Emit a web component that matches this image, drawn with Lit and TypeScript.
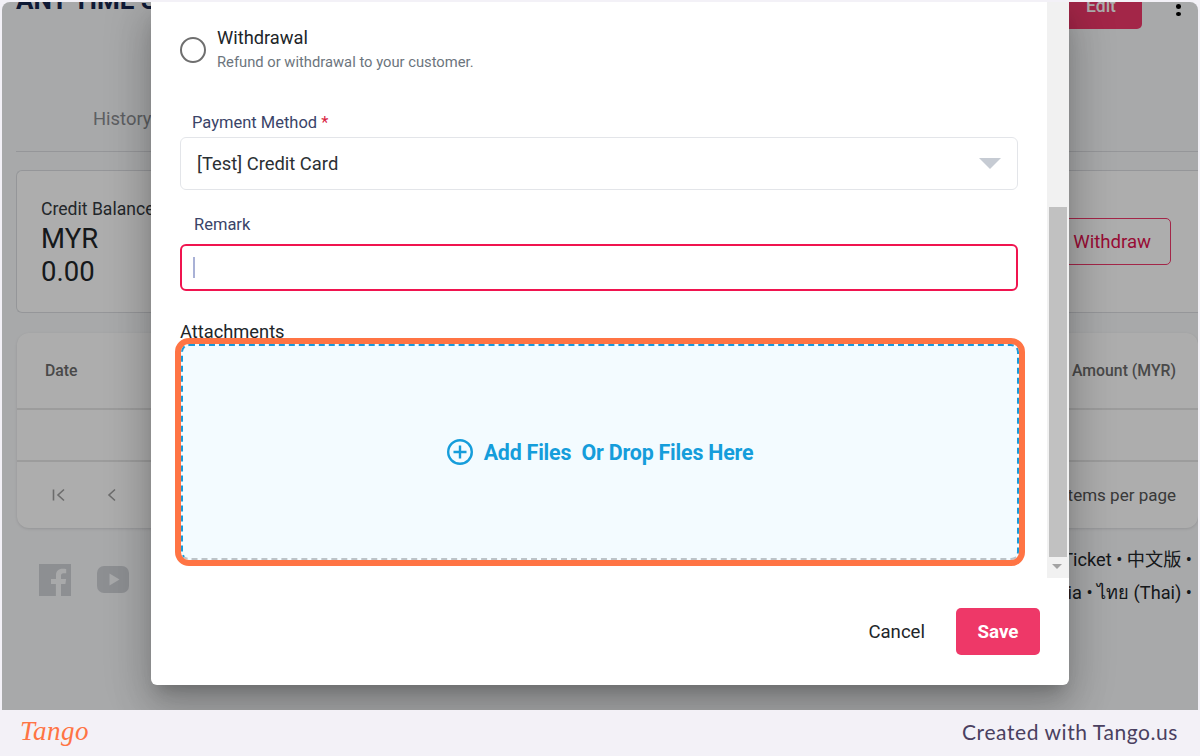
import { LitElement, css, html } from 'lit';
import { customElement } from 'lit/decorators.js';

@customElement('app-root')
export class AppRoot extends LitElement {
  static styles = css`
    :host {
      display: block;
      width: 1200px;
      height: 756px;
      overflow: hidden;
      background: #f3f1f7;
      font-family: Roboto, "Noto Sans CJK SC", sans-serif;
      color: #212529;
    }

    .shot {
      position: relative;
      height: 708px;
      margin: 2px 2px 0;
      border-radius: 8px 8px 0 0;
      overflow: hidden;
      background: #f8f9fb;
    }

    /* page behind the dialog */
    .page {
      display: flex;
      flex-direction: column;
      width: 1196px;
      padding-left: 14px;
      box-sizing: border-box;
    }

    .head {
      display: flex;
      justify-content: space-between;
      height: 26px;
      margin-top: -12px;
    }
    .title {
      margin-top: -3px;
      font-size: 26px;
      font-weight: 700;
      line-height: 26px;
      color: #16254f;
      white-space: nowrap;
    }
    .head-right {
      display: flex;
      gap: 34px;
      padding-right: 17px;
    }
    .edit {
      width: 82px;
      height: 39px;
      box-sizing: border-box;
      padding-top: 6px;
      border-radius: 5px;
      background: #f0386b;
      color: #fff;
      font-size: 17.5px;
      font-weight: 500;
      text-align: center;
    }
    .dots {
      display: flex;
      flex-direction: column;
      gap: 3px;
      padding-top: 6.5px;
    }
    .dots i {
      width: 5px;
      height: 5px;
      border-radius: 50%;
      background: #000;
    }

    .tabs {
      height: 122px;
      padding: 77px 0 0 77px;
      box-sizing: border-box;
      margin-top: 14px;
      border-bottom: 1px solid #dcdee2;
      font-size: 18.4px;
      line-height: 24px;
      color: #8a8d91;
    }

    .balance {
      display: flex;
      justify-content: space-between;
      align-items: center;
      height: 143px;
      margin-top: 18px;
      margin-right: -4px;
      box-sizing: border-box;
      padding: 0 31px 0 24px;
      border: 1px solid #dcdee2;
      border-right: 0;
      border-radius: 6px 0 0 6px;
      background: #fff;
    }
    .balance-info {
      padding-top: 1px;
    }
    .balance-label {
      font-size: 17.6px;
      line-height: 25px;
      color: #343a40;
    }
    .balance-value {
      font-size: 27.5px;
      line-height: 33px;
      color: #212529;
    }
    .withdraw {
      display: flex;
      align-items: center;
      justify-content: flex-end;
      width: 120px;
      height: 47px;
      box-sizing: border-box;
      padding-right: 19px;
      border: 1px solid #f0386b;
      border-radius: 5px;
      font-size: 18.6px;
      color: #e0134f;
    }

    .table {
      display: grid;
      grid-template-rows: 77px 52px 66px;
      height: 195px;
      margin: 20px 0 0 1px;
      border-radius: 12px;
      background: #fff;
      box-shadow: 0 1px 3px rgba(0, 0, 0, 0.12);
    }
    .row {
      display: flex;
      align-items: center;
      justify-content: space-between;
      padding: 0 22px 0 28px;
      border-bottom: 2px solid #e6e6e6;
    }
    .row:last-child {
      border-bottom: 0;
      padding-left: 33px;
    }
    .th {
      font-size: 15.8px;
      font-weight: 500;
      color: #6c6c6c;
    }
    .pager {
      display: flex;
      gap: 35px;
    }
    .pager svg {
      stroke: #a0a0a0;
    }
    .per-page {
      font-size: 17px;
      color: #555;
    }

    .foot {
      display: flex;
      justify-content: space-between;
      padding: 15px 6px 0 23px;
    }
    .social {
      display: flex;
      align-items: flex-start;
      gap: 26px;
      padding-top: 21px;
    }
    .yt {
      margin-top: 2px;
    }
    .links {
      text-align: right;
      font-size: 18.2px;
      line-height: 33px;
      color: #212529;
    }

    .overlay {
      position: absolute;
      inset: 0;
      background: rgba(0, 0, 0, 0.32);
    }

    /* dialog */
    .dialog {
      position: absolute;
      left: 149px;
      top: 0;
      display: flex;
      flex-direction: column;
      width: 918px;
      height: 683px;
      border-radius: 0 0 6px 6px;
      background: #fff;
      box-shadow: 0 11px 15px -7px rgba(0, 0, 0, 0.2),
        0 24px 38px 3px rgba(0, 0, 0, 0.14),
        0 9px 46px 8px rgba(0, 0, 0, 0.12);
    }
    .scroll {
      display: flex;
      height: 576px;
    }
    .body {
      flex: 1;
      padding: 25px 29px 0;
    }

    .radio-row {
      display: flex;
      gap: 11px;
      height: 49px;
    }
    .radio {
      width: 26px;
      height: 26px;
      margin-top: 10px;
      box-sizing: border-box;
      border: 2px solid #6f6f6f;
      border-radius: 50%;
    }
    .radio-title {
      font-size: 18.3px;
      line-height: 22px;
      color: #212529;
    }
    .radio-sub {
      margin-top: 4px;
      font-size: 14.75px;
      line-height: 18px;
      color: #6c757d;
    }

    .label {
      font-size: 16.5px;
      line-height: 20px;
      color: #3a4468;
    }
    .label b {
      font-weight: 400;
      color: #d9213f;
    }
    .pay-label {
      margin: 37px 0 0 12px;
    }
    .select {
      display: flex;
      align-items: center;
      justify-content: space-between;
      height: 53px;
      margin-top: 4px;
      box-sizing: border-box;
      padding: 0 16px 0 16px;
      border: 1px solid #e3e5e9;
      border-radius: 6px;
      font-size: 18.4px;
      color: #2b2f33;
    }
    .arrow {
      width: 0;
      height: 0;
      border-left: 11px solid transparent;
      border-right: 11px solid transparent;
      border-top: 11px solid #c6cbd3;
    }
    .remark-label {
      margin: 25px 0 0 14px;
    }
    .input {
      display: flex;
      align-items: center;
      height: 47px;
      margin-top: 9px;
      box-sizing: border-box;
      padding-left: 11px;
      border: 2px solid #f0144f;
      border-radius: 6px;
    }
    .caret {
      width: 2px;
      height: 21px;
      background: #a9b1d6;
    }
    .attach-label {
      margin-top: 30px;
      font-size: 18.3px;
      line-height: 22px;
      color: #212529;
    }
    .drop {
      position: relative;
      display: flex;
      align-items: center;
      justify-content: center;
      gap: 11px;
      height: 216px;
      margin: 1px -1px 0 1px;
      box-sizing: border-box;
      border: 2px dashed #1b9ad9;
      border-bottom-color: #bcc3c8;
      border-radius: 8px;
      background: #f3fbff;
      color: #159ddb;
      font-size: 21.4px;
      font-weight: 700;
      letter-spacing: -0.2px;
      white-space: pre;
    }
    .drop::after {
      content: '';
      position: absolute;
      inset: -8px;
      border: 6px solid #ff7444;
      border-radius: 14px;
    }

    .track {
      display: flex;
      flex-direction: column;
      width: 22px;
      box-sizing: border-box;
      padding-right: 2px;
      background: #f1f1f1;
    }
    .thumb {
      height: 350px;
      margin: 205px 0 0 2px;
      background: #c1c1c1;
    }
    .track-arrow {
      align-self: center;
      width: 0;
      height: 0;
      margin-top: 7px;
      border-left: 5px solid transparent;
      border-right: 5px solid transparent;
      border-top: 5px solid #a3a3a3;
    }

    .actions {
      display: flex;
      justify-content: flex-end;
      align-items: center;
      gap: 31px;
      padding: 30px 29px 0 0;
    }
    .cancel {
      font-size: 18.6px;
      color: #212529;
    }
    .save {
      display: flex;
      align-items: center;
      justify-content: center;
      width: 84px;
      height: 47px;
      border-radius: 5px;
      background: #ee3868;
      color: #fff;
      font-size: 18.8px;
      font-weight: 700;
    }

    /* tango bar */
    .bar {
      display: flex;
      align-items: center;
      justify-content: space-between;
      height: 46px;
      box-sizing: border-box;
      padding: 0 22px 3px 20px;
    }
    .logo {
      font-family: "Liberation Serif", serif;
      font-style: italic;
      font-size: 27px;
      letter-spacing: 0.5px;
      color: #ff7444;
    }
    .credit {
      font-family: Lato, sans-serif;
      font-size: 21px;
      letter-spacing: 0.57px;
      color: #4a4060;
    }
  `;

  render() {
    return html`
      <div class="shot">
        <div class="page">
          <div class="head">
            <div class="title">ANY TIME SPORTS</div>
            <div class="head-right">
              <div class="edit">Edit</div>
              <div class="dots"><i></i><i></i><i></i></div>
            </div>
          </div>
          <div class="tabs">History</div>
          <div class="balance">
            <div class="balance-info">
              <div class="balance-label">Credit Balance</div>
              <div class="balance-value">MYR</div>
              <div class="balance-value">0.00</div>
            </div>
            <div class="withdraw">Withdraw</div>
          </div>
          <div class="table">
            <div class="row">
              <span class="th">Date</span>
              <span class="th">Amount (MYR)</span>
            </div>
            <div class="row"></div>
            <div class="row">
              <div class="pager">
                <svg width="18" height="18" viewBox="0 0 18 18" fill="none" stroke-width="1.6">
                  <path d="M3.5 3.5v11M14 3.5 8 9l6 5.5" />
                </svg>
                <svg width="18" height="18" viewBox="0 0 18 18" fill="none" stroke-width="1.6">
                  <path d="M12 3.5 6 9l6 5.5" />
                </svg>
              </div>
              <span class="per-page">Items per page</span>
            </div>
          </div>
          <div class="foot">
            <div class="social">
              <svg width="32" height="32" viewBox="0 0 32 32">
                <path fill="#d0d3d8" d="M0 0h32v32H22V20h4.4l.7-5H22v-3.2c0-1.5.5-2.5 2.6-2.5h2.6V4.9c-.5-.1-2-.2-3.8-.2-3.8 0-6.4 2.3-6.4 6.6V15H12v5h4.9v12H0z" />
              </svg>
              <svg class="yt" width="32" height="27" viewBox="0 0 32 27">
                <rect width="32" height="27" rx="7" fill="#d0d3d8" />
                <path fill="#f8f9fb" d="M12.5 7.5v12l10-6z" />
              </svg>
            </div>
            <div class="links">
              <div>Submit Ticket • 中文版 •</div>
              <div>Bahasa Malaysia • ไทย (Thai) •</div>
            </div>
          </div>
        </div>
        <div class="overlay"></div>
        <div class="dialog">
          <div class="scroll">
            <div class="body">
              <div class="radio-row">
                <div class="radio"></div>
                <div>
                  <div class="radio-title">Withdrawal</div>
                  <div class="radio-sub">Refund or withdrawal to your customer.</div>
                </div>
              </div>
              <div class="label pay-label">Payment Method <b>*</b></div>
              <div class="select">[Test] Credit Card<span class="arrow"></span></div>
              <div class="label remark-label">Remark</div>
              <div class="input"><span class="caret"></span></div>
              <div class="attach-label">Attachments</div>
              <div class="drop">
                <svg width="26" height="26" viewBox="0 0 26 26" fill="none" stroke="#159ddb" stroke-width="2.4">
                  <circle cx="13" cy="13" r="11.8" />
                  <path d="M13 6.5v13M6.5 13h13" />
                </svg>
                <span>Add Files  Or Drop Files Here</span>
              </div>
            </div>
            <div class="track">
              <div class="thumb"></div>
              <div class="track-arrow"></div>
            </div>
          </div>
          <div class="actions">
            <span class="cancel">Cancel</span>
            <span class="save">Save</span>
          </div>
        </div>
      </div>
      <div class="bar">
        <span class="logo">Tango</span>
        <span class="credit">Created with Tango.us</span>
      </div>
    `;
  }
}
